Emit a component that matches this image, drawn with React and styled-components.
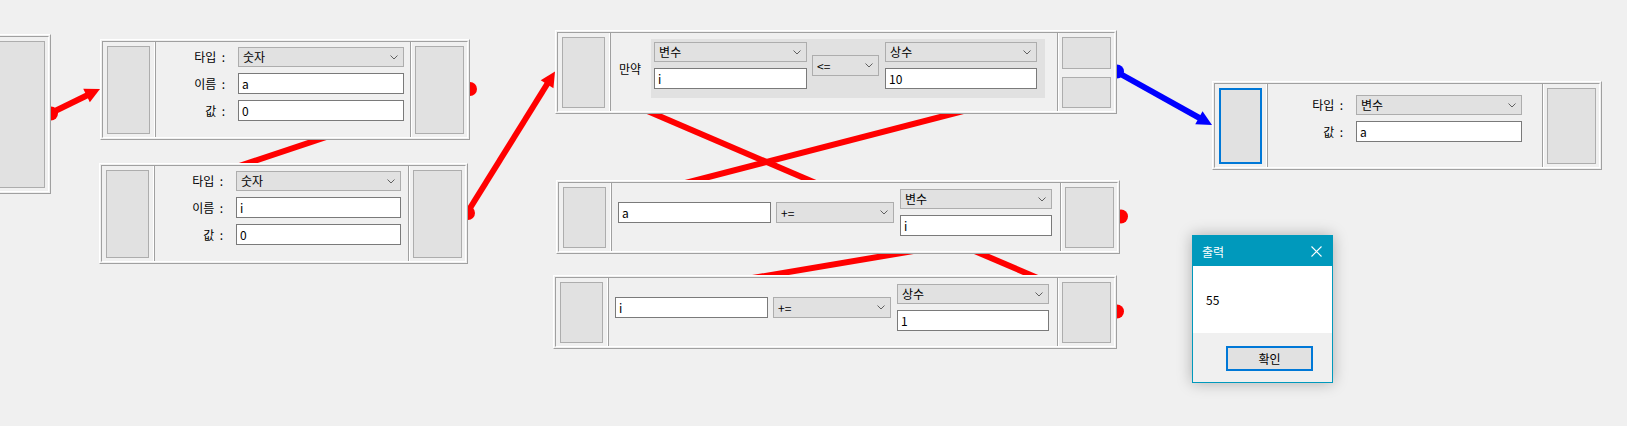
import React from 'react';
import styled, { createGlobalStyle } from 'styled-components';

const GlobalStyle = createGlobalStyle`
  html, body { margin: 0; padding: 0; background: #f0f0f0; }
  body {
    font-family: "Noto Sans CJK KR", "Noto Sans", "Liberation Sans", sans-serif;
    font-size: 12px;
    color: #000;
  }
`;

const Canvas = styled.div`
  position: relative;
  width: 1627px;
  height: 426px;
  overflow: hidden;
  background: #f0f0f0;
`;

const Wires = styled.svg`
  position: absolute;
  left: 0;
  top: 0;
  pointer-events: none;
`;

const NodeFrame = styled.div`
  position: absolute;
  left: ${(p) => p.$x}px;
  top: ${(p) => p.$y}px;
  width: ${(p) => p.$w}px;
  height: ${(p) => p.$h}px;
  box-sizing: border-box;
  border: 1px solid;
  border-color: #ffffff #a0a0a0 #a0a0a0 #ffffff;
  padding: 1px;
  background: #f0f0f0;
`;

const NodeBody = styled.div`
  display: flex;
  height: 100%;
  box-sizing: border-box;
  border: 1px solid;
  border-color: #a0a0a0 #ffffff #ffffff #a0a0a0;
`;

const InPorts = styled.div`
  flex: 0 0 auto;
  display: flex;
  flex-direction: column;
  padding: 4px 4px 3px 4px;
  border-right: 1px solid #ffffff;
`;

const OutPorts = styled.div`
  flex: 0 0 auto;
  display: flex;
  flex-direction: column;
  gap: 8px;
  padding: 4px 3px 3px 3px;
  border-left: 1px solid #ffffff;
`;

const PortBox = styled.div`
  flex: 1 1 auto;
  width: ${(p) => p.$w}px;
  box-sizing: border-box;
  background: #e1e1e1;
  border: ${(p) => (p.$focused ? '2px solid #0078d7' : '1px solid #adadad')};
`;

const Middle = styled.div`
  flex: 1 1 auto;
  min-width: 0;
  border-left: 1px solid #a0a0a0;
  border-right: 1px solid #a0a0a0;
`;

const FieldGrid = styled(Middle)`
  display: grid;
  grid-template-columns: 1fr ${(p) => p.$fw}px;
  column-gap: 13px;
  row-gap: 6px;
  align-content: start;
  align-items: center;
  padding-top: ${(p) => p.$pt}px;
  padding-right: ${(p) => p.$pr}px;
`;

const StatementArea = styled(Middle)`
  display: flex;
  align-items: flex-start;
  padding: 6px 0 0 ${(p) => p.$pl}px;
`;

const StatementRow = styled.div`
  display: flex;
  align-items: center;
`;

const Label = styled.span`
  text-align: right;
  white-space: pre;
  line-height: 14px;
`;

const IfLabel = styled.span`
  white-space: nowrap;
  line-height: 14px;
  margin-right: 10px;
`;

const ConditionPanel = styled.div`
  display: flex;
  align-items: center;
  background: #e1e1e1;
  padding: 3px 8px 9px 3px;
`;

const Stack = styled.div`
  display: flex;
  flex-direction: column;
  gap: 6px;
  width: ${(p) => p.$w}px;
  margin-left: ${(p) => p.$ml || 0}px;
`;

const SelectBox = styled.div`
  box-sizing: border-box;
  width: ${(p) => (p.$w ? `${p.$w}px` : 'auto')};
  height: ${(p) => p.$h || 20}px;
  margin-left: ${(p) => p.$ml || 0}px;
  display: flex;
  align-items: center;
  justify-content: space-between;
  padding: 0 5px 0 4px;
  background: #e1e1e1;
  border: 1px solid #adadad;
  line-height: 14px;
  white-space: nowrap;
`;

const TextBox = styled.input`
  box-sizing: border-box;
  width: ${(p) => (p.$w ? `${p.$w}px` : '100%')};
  height: 21px;
  margin: 0;
  padding: 0 3px;
  background: #ffffff;
  border: 1px solid #7a7a7a;
  border-radius: 0;
  font: inherit;
  font-size: 12px;
  color: #000;
  outline: none;
`;

const Dialog = styled.div`
  position: absolute;
  left: 1192px;
  top: 235px;
  width: 141px;
  height: 148px;
  box-sizing: border-box;
  display: flex;
  flex-direction: column;
  border: 1px solid #0099bc;
  background: #f0f0f0;
  box-shadow: 0 0 14px rgba(0, 0, 0, 0.28);
`;

const DialogTitle = styled.div`
  height: 30px;
  flex: 0 0 auto;
  display: flex;
  align-items: center;
  justify-content: space-between;
  padding: 0 10px 0 9px;
  background: #0099bc;
  color: #ffffff;
  font-size: 12px;
`;

const DialogBody = styled.div`
  height: 67px;
  flex: 0 0 auto;
  display: flex;
  align-items: center;
  padding-left: 13px;
  background: #ffffff;
  font-size: 12px;
`;

const DialogFooter = styled.div`
  flex: 1 1 auto;
  display: flex;
  justify-content: flex-end;
  align-items: flex-start;
  padding: 13px 19px 0 0;
`;

const DialogButton = styled.button`
  box-sizing: border-box;
  width: 87px;
  height: 25px;
  margin: 0;
  padding: 0;
  background: #e1e1e1;
  border: 2px solid #0078d7;
  font: inherit;
  font-size: 12px;
  color: #000;
`;

function Chevron() {
  return (
    <svg width="8" height="5" viewBox="0 0 8 5">
      <polyline points="0.5,0.5 4,4 7.5,0.5" fill="none" stroke="#606060" strokeWidth="1" />
    </svg>
  );
}

function Select({ children, w, h, ml }) {
  return (
    <SelectBox $w={w} $h={h} $ml={ml}>
      <span>{children}</span>
      <Chevron />
    </SelectBox>
  );
}

function Field({ value, w }) {
  return <TextBox readOnly value={value} $w={w} />;
}

const RED = '#ff0000';
const BLUE = '#0000ff';

const wires = [
  { from: [50, 113.5], to: [100, 89], c: RED },
  { from: [470, 89], to: [99, 213], c: RED },
  { from: [467, 213], to: [555, 71.5], c: RED },
  { from: [1116, 71.5], to: [556, 216.5], c: RED },
  { from: [1119, 216.5], to: [553, 311.5], c: RED },
  { from: [1116, 311.5], to: [555, 71.5], c: RED },
  { from: [1116, 71.5], to: [1212, 125], c: BLUE },
];

const dots = [
  { x: 51, y: 113.5, c: RED },
  { x: 470, y: 89, c: RED },
  { x: 468, y: 213, c: RED },
  { x: 1121, y: 216.5, c: RED },
  { x: 1117, y: 311.5, c: RED },
  { x: 1117, y: 71.5, c: BLUE },
];

function Wire({ from, to, c }) {
  const [x1, y1] = from;
  const [x2, y2] = to;
  const dx = x2 - x1;
  const dy = y2 - y1;
  const len = Math.hypot(dx, dy);
  const ux = dx / len;
  const uy = dy / len;
  const L = 15;
  const W = 7.5;
  const bx = x2 - ux * L;
  const by = y2 - uy * L;
  const nx = -uy;
  const ny = ux;
  const pts = `${x2},${y2} ${bx + nx * W},${by + ny * W} ${bx - nx * W},${by - ny * W}`;
  return (
    <g>
      <line x1={x1} y1={y1} x2={bx + ux * 2} y2={by + uy * 2} stroke={c} strokeWidth="6" />
      <polygon points={pts} fill={c} />
    </g>
  );
}

function InPort({ focused }) {
  return (
    <InPorts>
      <PortBox $w={43} $focused={focused} />
    </InPorts>
  );
}

function OutPort({ count = 1 }) {
  return (
    <OutPorts>
      {Array.from({ length: count }).map((_, i) => (
        <PortBox key={i} $w={49} />
      ))}
    </OutPorts>
  );
}

function VarNode({ x, y, w, h, fw, pt, pr, rows, focused }) {
  return (
    <NodeFrame $x={x} $y={y} $w={w} $h={h}>
      <NodeBody>
        <InPort focused={focused} />
        <FieldGrid $fw={fw} $pt={pt} $pr={pr}>
          {rows.map((r) => (
            <React.Fragment key={r.label}>
              <Label>{r.label}</Label>
              {r.select ? <Select>{r.value}</Select> : <Field value={r.value} />}
            </React.Fragment>
          ))}
        </FieldGrid>
        <OutPort />
      </NodeBody>
    </NodeFrame>
  );
}

function AssignNode({ x, y, target, op, kind, value }) {
  return (
    <NodeFrame $x={x} $y={y} $w={564} $h={74}>
      <NodeBody>
        <InPort />
        <StatementArea $pl={6}>
          <StatementRow>
            <Field value={target} w={153} />
            <Select w={118} h={21} ml={5}>{op}</Select>
            <Stack $w={152} $ml={6}>
              <Select>{kind}</Select>
              <Field value={value} />
            </Stack>
          </StatementRow>
        </StatementArea>
        <OutPort />
      </NodeBody>
    </NodeFrame>
  );
}

export default function App() {
  return (
    <>
      <GlobalStyle />
      <Canvas>
        <Wires width="1627" height="426" viewBox="0 0 1627 426">
          {wires.map((wd, i) => (
            <Wire key={i} {...wd} />
          ))}
          {dots.map((d, i) => (
            <circle key={i} cx={d.x} cy={d.y} r="7" fill={d.c} />
          ))}
        </Wires>

        <NodeFrame $x={-11} $y={34} $w={62} $h={160}>
          <NodeBody>
            <OutPort />
          </NodeBody>
        </NodeFrame>

        <VarNode
          x={100}
          y={39}
          w={370}
          h={101}
          fw={166}
          pt={5}
          pr={6}
          rows={[
            { label: '타입  :', value: '숫자', select: true },
            { label: '이름  :', value: 'a' },
            { label: '값  :', value: '0' },
          ]}
        />

        <VarNode
          x={99}
          y={163}
          w={369}
          h={101}
          fw={165}
          pt={5}
          pr={7}
          rows={[
            { label: '타입  :', value: '숫자', select: true },
            { label: '이름  :', value: 'i' },
            { label: '값  :', value: '0' },
          ]}
        />

        <NodeFrame $x={555} $y={30} $w={562} $h={84}>
          <NodeBody>
            <InPort />
            <StatementArea $pl={8}>
              <StatementRow>
                <IfLabel>만약</IfLabel>
                <ConditionPanel>
                  <Stack $w={153}>
                    <Select>변수</Select>
                    <Field value="i" />
                  </Stack>
                  <Select w={67} h={21} ml={5}>{'<='}</Select>
                  <Stack $w={152} $ml={6}>
                    <Select>상수</Select>
                    <Field value="10" />
                  </Stack>
                </ConditionPanel>
              </StatementRow>
            </StatementArea>
            <OutPort count={2} />
          </NodeBody>
        </NodeFrame>

        <AssignNode x={556} y={180} target="a" op="+=" kind="변수" value="i" />
        <AssignNode x={553} y={275} target="i" op="+=" kind="상수" value="1" />

        <VarNode
          x={1212}
          y={81}
          w={390}
          h={89}
          fw={166}
          pt={11}
          pr={20}
          focused
          rows={[
            { label: '타입  :', value: '변수', select: true },
            { label: '값  :', value: 'a' },
          ]}
        />

        <Dialog>
          <DialogTitle>
            <span>출력</span>
            <svg width="11" height="11" viewBox="0 0 11 11">
              <path d="M0.5 0.5 L10.5 10.5 M10.5 0.5 L0.5 10.5" stroke="#ffffff" strokeWidth="1.1" />
            </svg>
          </DialogTitle>
          <DialogBody>55</DialogBody>
          <DialogFooter>
            <DialogButton type="button">확인</DialogButton>
          </DialogFooter>
        </Dialog>
      </Canvas>
    </>
  );
}
